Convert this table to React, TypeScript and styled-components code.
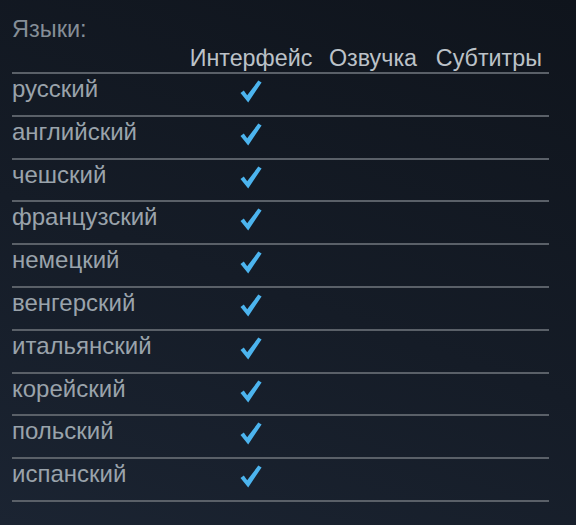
import { FC } from "react";
import styled, { createGlobalStyle } from "styled-components";

const languages = [
  'русский',
  'английский',
  'чешский',
  'французский',
  'немецкий',
  'венгерский',
  'итальянский',
  'корейский',
  'польский',
  'испанский',
];

const Check: FC = () => (
  <svg width="22" height="23" viewBox="0 0 22 23">
    <path
      d="M0.5 13 L3.8 10.5 L7.2 15.2 L18.3 0.6 L21.6 2.6 L8.2 22.4 Z"
      fill="#4cb4ee"
    />
  </svg>
);

export default function App() {
  return (
    <>
      <Global />
      <S.Page>
        <S.Title>Языки:</S.Title>
        <S.Table>
          <thead>
            <tr>
              <S.Th />
              <S.Th $w={146}>Интерфейс</S.Th>
              <S.Th $w={98}>Озвучка</S.Th>
              <S.Th $w={120} $right>Субтитры</S.Th>
            </tr>
          </thead>
          <tbody>
            {languages.map(lang => (
              <S.Row key={lang}>
                <S.Name>{lang}</S.Name>
                <S.Cell><Check /></S.Cell>
                <S.Cell />
                <S.Cell />
              </S.Row>
            ))}
          </tbody>
        </S.Table>
      </S.Page>
    </>
  );
}

const Global = createGlobalStyle`
  html, body {
    margin: 0;
    padding: 0;
  }
  body {
    background: linear-gradient(200deg, #0f141c 0%, #151c27 55%, #1b2432 100%);
    min-height: 525px;
    font-family: "Liberation Sans", Arial, sans-serif;
  }
`;

const S = {
  Page: styled.div`
    width: 576px;
    height: 525px;
    box-sizing: border-box;
    padding: 15px 27px 0 12px;
  `,
  Title: styled.div`
    color: #858e97;
    font-size: 23.5px;
    line-height: 28px;
    margin-bottom: 1px;
  `,
  Table: styled.table`
    width: 100%;
    border-collapse: collapse;
    border-spacing: 0;
    table-layout: fixed;
  `,
  Th: styled.th<{ $w?: number; $right?: boolean }>`
    width: ${p => (p.$w ? `${p.$w}px` : 'auto')};
    color: #bcc2c8;
    font-weight: 400;
    font-size: 23.3px;
    line-height: 28px;
    padding: 0 ${p => (p.$right ? '7px' : '0')} 0 0;
    text-align: ${p => (p.$right ? 'right' : 'center')};
    white-space: nowrap;
    border-bottom: 2px solid #5a6068;
  `,
  Row: styled.tr`
    border-bottom: 2px solid #5a6068;
  `,
  Name: styled.td`
    color: #9aa3ab;
    font-size: 24px;
    line-height: 28px;
    padding: 1px 0 11.8px;
    white-space: nowrap;
  `,
  Cell: styled.td`
    text-align: center;
    vertical-align: top;
    padding: 6px 0 0;
    line-height: 0;
  `,
};
